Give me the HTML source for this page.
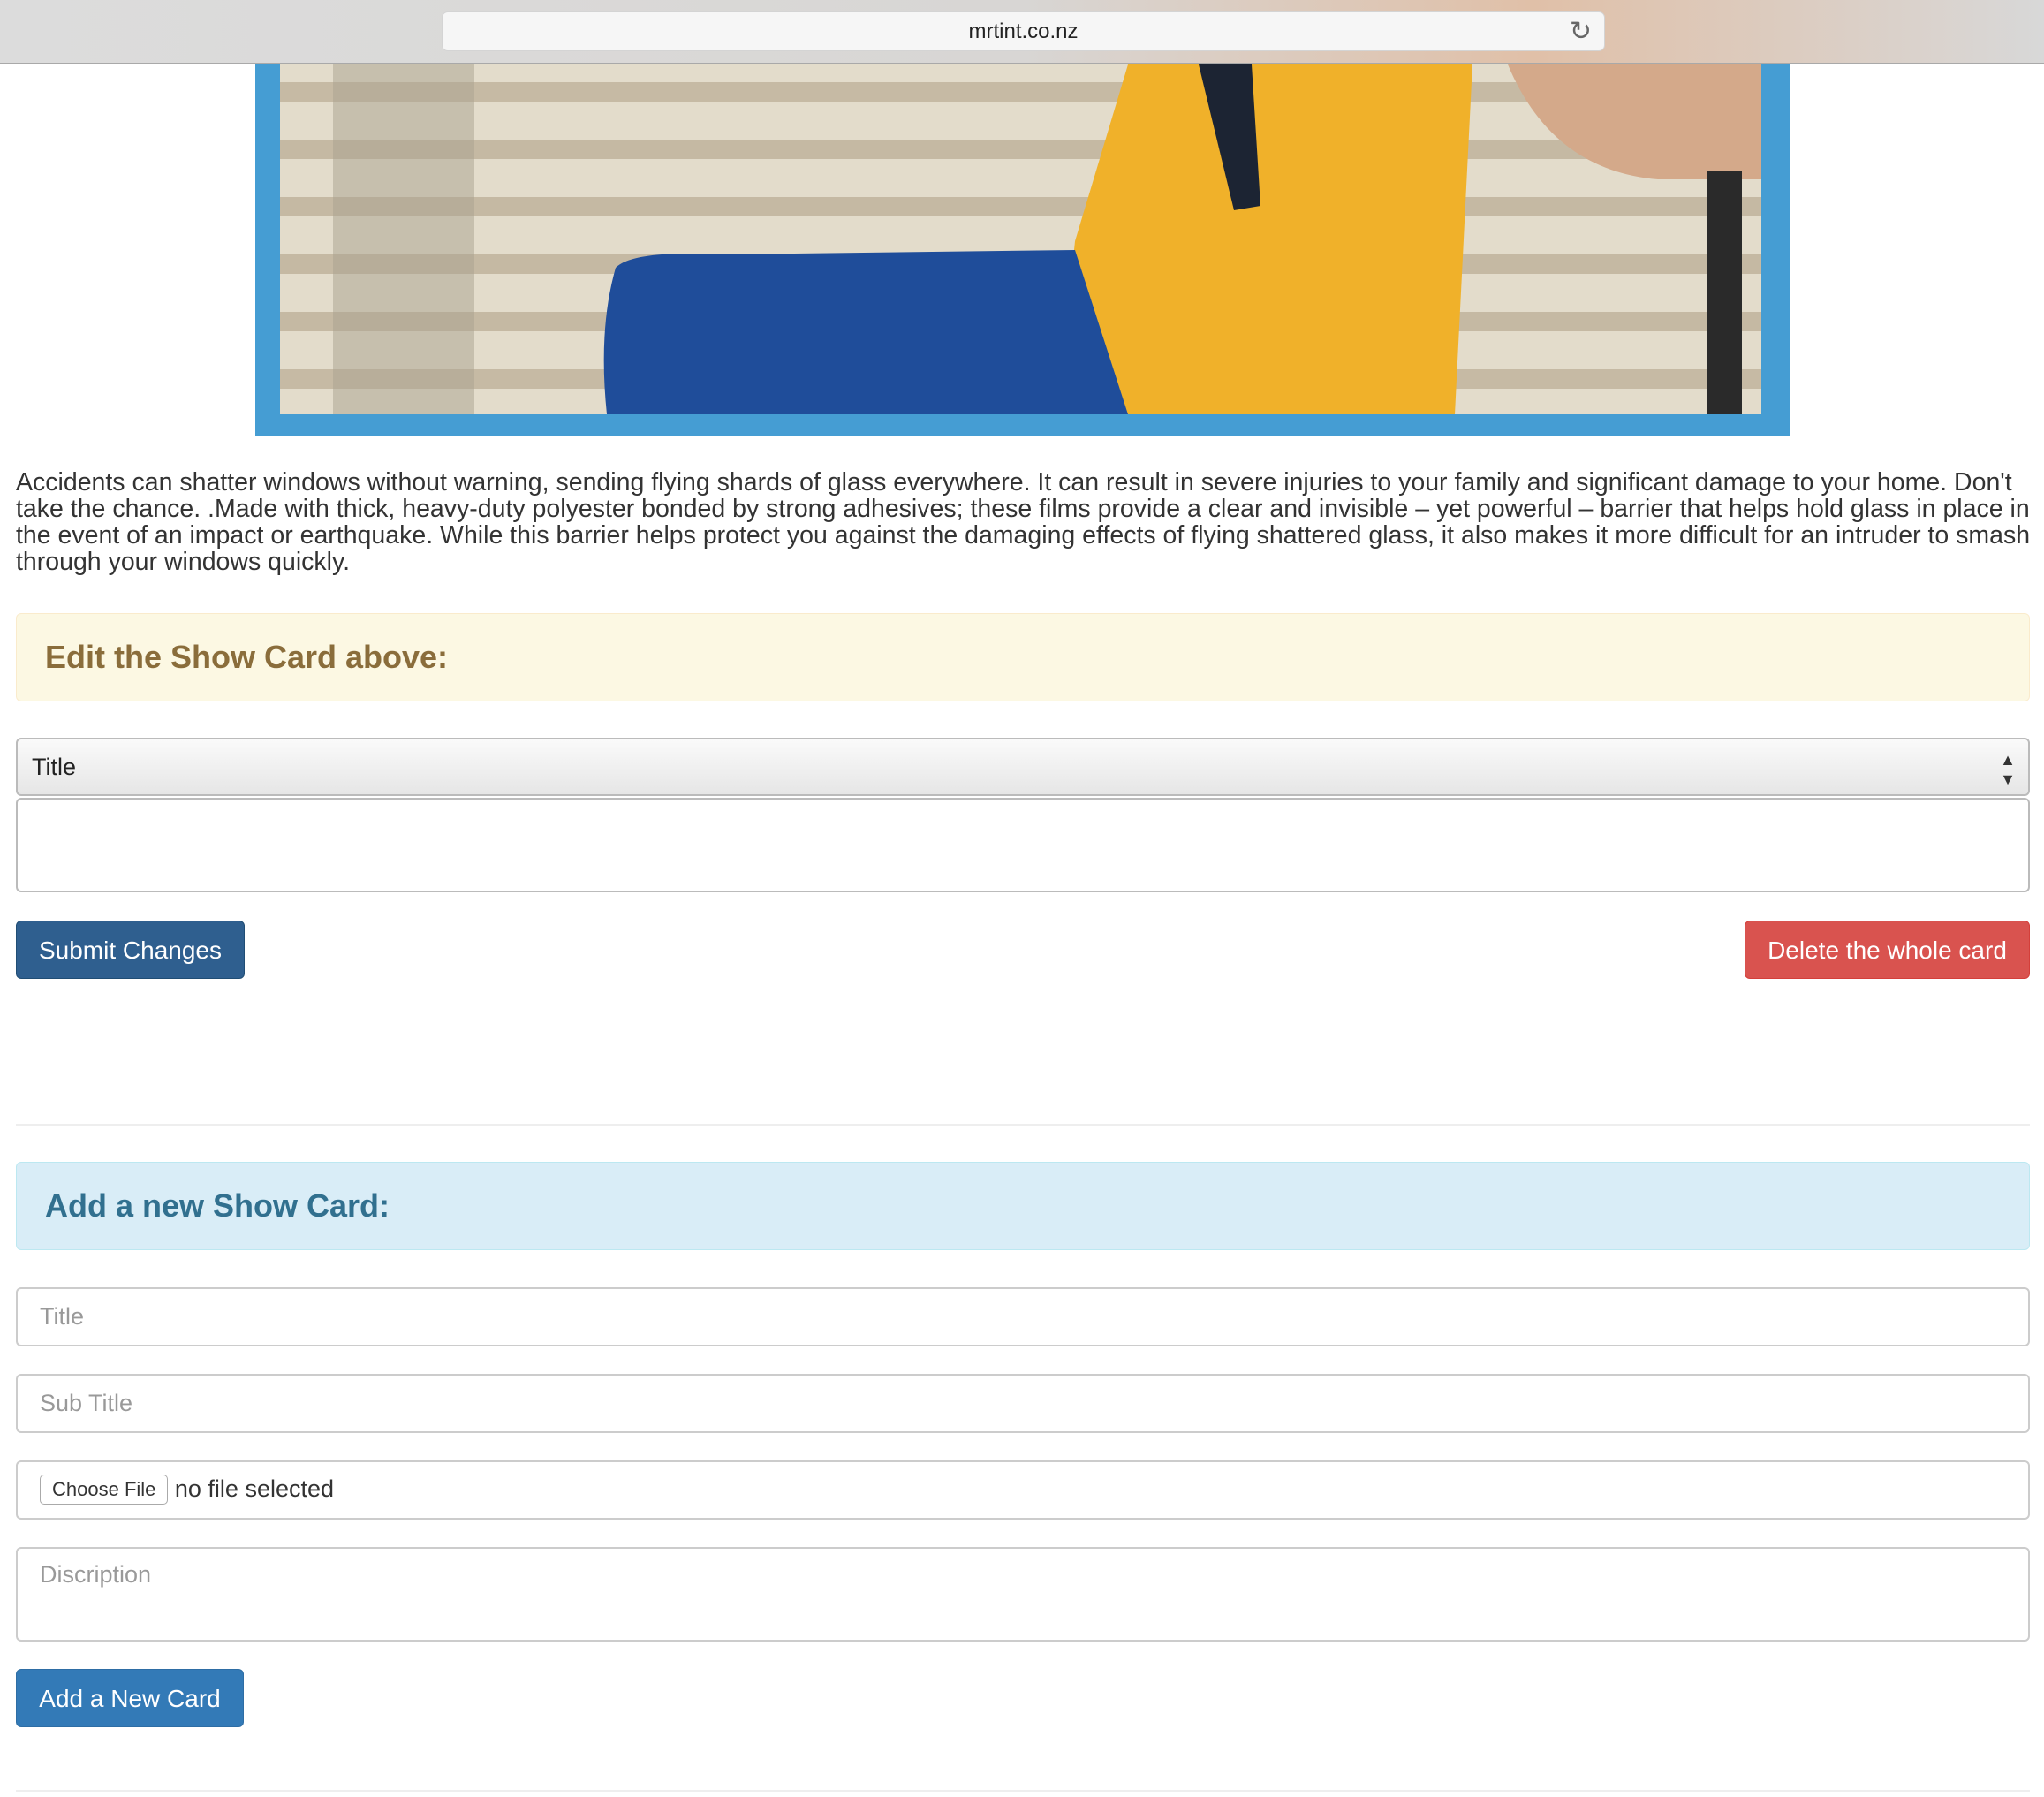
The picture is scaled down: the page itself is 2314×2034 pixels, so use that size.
<!DOCTYPE html>
<html><head><meta charset="utf-8"><style>
*{box-sizing:border-box;margin:0;padding:0}
body{width:2314px;height:2034px;background:#fff;font-family:"Liberation Sans",Arial,sans-serif;position:relative;overflow:hidden;color:#333}
.abs{position:absolute}
.bar{left:0;top:0;width:2314px;height:73px;background:linear-gradient(90deg,#dcdcdc 0%,#d8d6d4 50%,#e0c0a8 75%,#d8d8d8 100%);border-bottom:2px solid #a9a9a9}
.url{left:500px;top:13px;width:1317px;height:45px;background:#f6f6f6;border-radius:7px;border:1px solid #d4d4d4;text-align:center;font-size:24px;line-height:44px;color:#222}
p.txt{left:18px;top:531px;width:2282px;font-size:28.5px;line-height:30px;color:#333}
.panel{left:18px;width:2280px;height:100px;border:1px solid;border-radius:6px;font-weight:bold;font-size:36px;padding-left:32px;line-height:98px}
.inp{left:18px;width:2280px;border:2px solid #ccc;border-radius:6px;font-size:27px;color:#999;padding-left:25px}
.btn{border-radius:6px;color:#fff;font-size:28px;text-align:center;line-height:65px;height:66px}
.hr{left:18px;width:2280px;height:2px;background:#eee}
</style></head><body>
<div class="abs bar"></div>
<div class="abs url">mrtint.co.nz<span style="position:absolute;right:14px;top:0;font-size:30px;color:#666">↻</span></div>
<div class="abs" style="left:289px;top:73px;width:1737px;height:420px;background:#459dd3"></div>
<svg class="abs" style="left:317px;top:73px" width="1677" height="396" viewBox="0 0 1677 396">
<rect width="1677" height="396" fill="#e3dccb"/>
<g fill="#b9ab93" opacity=".7">
<rect x="0" y="20" width="1677" height="22"/><rect x="0" y="85" width="1677" height="22"/><rect x="0" y="150" width="1677" height="22"/><rect x="0" y="215" width="1677" height="22"/><rect x="0" y="280" width="1677" height="22"/><rect x="0" y="345" width="1677" height="22"/></g>
<rect x="60" y="0" width="160" height="396" fill="#a9a290" opacity=".5"/>
<path d="M960 0 L1350 0 L1330 396 L880 396 L900 200 Z" fill="#f0b12a"/>
<path d="M1350 0 L1677 0 L1677 130 L1560 130 Q1440 120 1390 0 Z" fill="#d4a98a"/>
<rect x="1615" y="120" width="40" height="276" fill="#2a2a2a"/>
<path d="M1040 0 L1100 0 L1110 160 L1080 165 Z" fill="#1c2433"/>
<path d="M380 230 Q400 210 500 215 L900 210 L960 396 L370 396 Q360 300 380 230 Z" fill="#1f4d9a"/>
</svg>
<p class="abs txt">Accidents can shatter windows without warning, sending flying shards of glass everywhere. It can result in severe injuries to your family and significant damage to your home. Don't take the chance. .Made with thick, heavy-duty polyester bonded by strong adhesives; these films provide a clear and invisible – yet powerful – barrier that helps hold glass in place in the event of an impact or earthquake. While this barrier helps protect you against the damaging effects of flying shattered glass, it also makes it more difficult for an intruder to smash through your windows quickly.</p>
<div class="abs panel" style="top:694px;background:#fcf8e3;border-color:#faebcc;color:#8a6d3b">Edit the Show Card above:</div>
<div class="abs inp" style="top:835px;height:66px;background:linear-gradient(#fafafa,#e6e6e6);color:#222;line-height:62px;border-color:#bbb;padding-left:16px">Title<span style="position:absolute;right:14px;top:0;font-size:18px;line-height:22px;padding-top:12px;color:#333">▲<br>▼</span></div>
<div class="abs inp" style="top:903px;height:107px;border-color:#bbb"></div>
<div class="abs btn" style="left:18px;top:1042px;width:259px;background:#2f5f8f;border:1px solid #204d74">Submit Changes</div>
<div class="abs btn" style="left:1975px;top:1042px;width:323px;background:#d9534f;border:1px solid #d43f3a">Delete the whole card</div>
<div class="abs hr" style="top:1272px"></div>
<div class="abs panel" style="top:1315px;background:#d9edf7;border-color:#bce8f1;color:#31708f">Add a new Show Card:</div>
<div class="abs inp" style="top:1457px;height:67px;line-height:63px">Title</div>
<div class="abs inp" style="top:1555px;height:67px;line-height:63px">Sub Title</div>
<div class="abs inp" style="top:1653px;height:67px;color:#333;line-height:60px">
<span style="display:inline-block;border:1px solid #aaa;border-radius:5px;font-size:22px;line-height:32px;padding:0 13px;background:#fff;vertical-align:middle;margin-top:-2px">Choose File</span> no file selected</div>
<div class="abs inp" style="top:1751px;height:107px;padding-top:14px">Discription</div>
<div class="abs btn" style="left:18px;top:1889px;width:258px;background:#337ab7;border:1px solid #2e6da4">Add a New Card</div>
<div class="abs hr" style="top:2026px"></div>
</body></html>
